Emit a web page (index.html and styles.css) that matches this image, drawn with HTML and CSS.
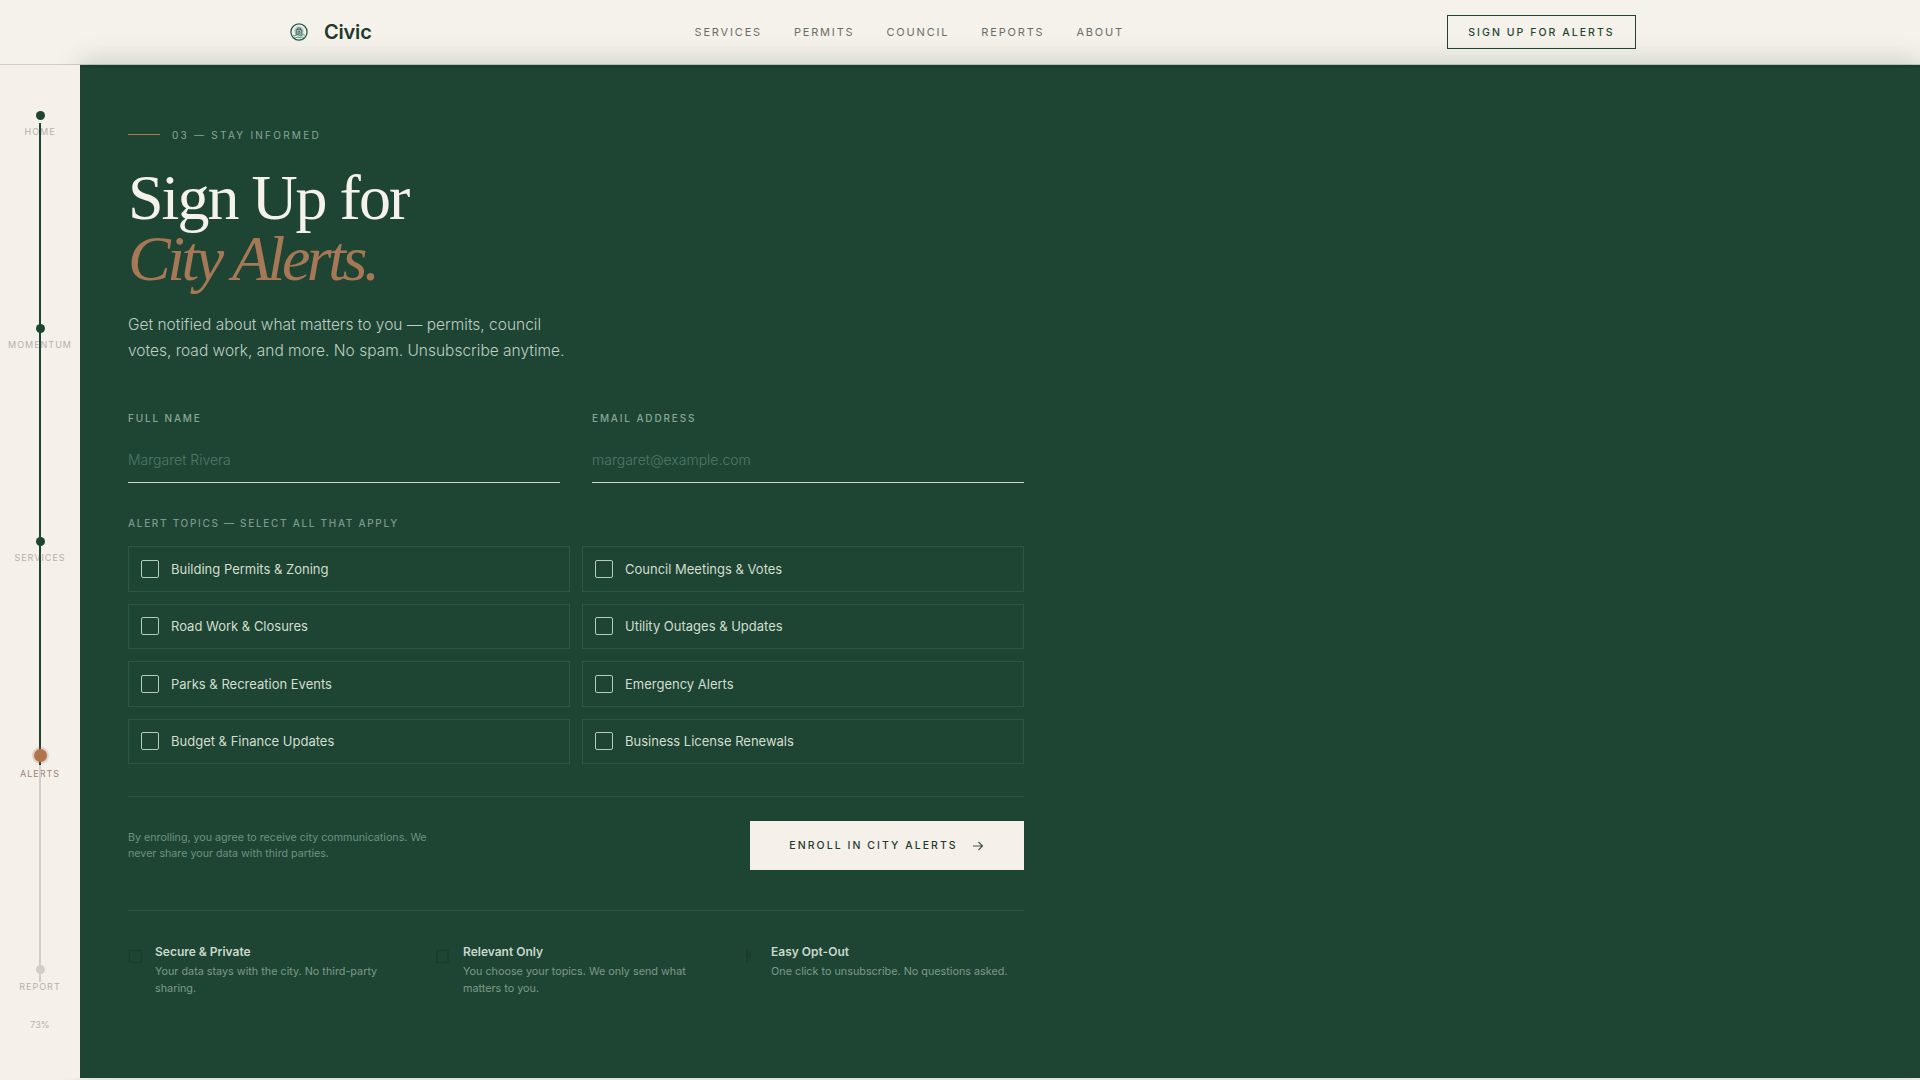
FILE: index.html
```html
<!DOCTYPE html>
<html lang="en">
<head>
<meta charset="utf-8">
<title>Civic — Sign Up for City Alerts</title>
<link rel="stylesheet" href="styles.css">
</head>
<body>
<header class="topbar">
  <a class="brand" href="#">
    <svg class="brand-mark" viewBox="0 0 20 20" aria-hidden="true">
      <circle cx="10" cy="10" r="9" fill="#eef0ea" stroke="#24564a" stroke-width="1.4"/>
      <circle cx="10" cy="9" r="5.4" fill="#bccaca"/>
      <path d="M7 13V7.5h6V13M8.5 7.5V5.6h3v1.9M9 13V9.5h2V13" fill="none" stroke="#2c5a4c" stroke-width="0.9"/>
      <path d="M3.5 13.5q1.6 1.4 3.2 0t3.3 0 3.3 0 3.2 0M5 16q1.3 1 2.5 0t2.5 0 2.5 0 2.5 0" fill="none" stroke="#2c6a55" stroke-width="0.9"/>
    </svg>
    <span class="brand-name">Civic</span>
  </a>
  <nav class="nav">
    <a href="#">SERVICES</a>
    <a href="#">PERMITS</a>
    <a href="#">COUNCIL</a>
    <a href="#">REPORTS</a>
    <a href="#">ABOUT</a>
  </nav>
  <a class="cta" href="#">SIGN UP FOR ALERTS</a>
</header>

<div class="shell">
  <aside class="rail">
    <div class="rail-track"></div>
    <div class="rail-fill"></div>
    <div class="stop"><span class="dot"></span><span class="stop-label">HOME</span></div>
    <div class="stop"><span class="dot"></span><span class="stop-label">MOMENTUM</span></div>
    <div class="stop"><span class="dot"></span><span class="stop-label">SERVICES</span></div>
    <div class="stop stop-active"><span class="dot"></span><span class="stop-label">ALERTS</span></div>
    <div class="stop stop-next"><span class="dot"></span><span class="stop-label">REPORT</span></div>
    <div class="rail-pct">73%</div>
  </aside>

  <main class="panel">
    <div class="eyebrow"><span class="eyebrow-rule"></span><span>03 — STAY INFORMED</span></div>
    <h1 class="title">Sign Up for<br><em>City Alerts.</em></h1>
    <p class="lede">Get notified about what matters to you — permits, council<br>votes, road work, and more. No spam. Unsubscribe anytime.</p>

    <form class="form">
      <div class="fields">
        <label class="field"><span class="field-label">FULL NAME</span><input class="field-input" type="text" placeholder="Margaret Rivera"></label>
        <label class="field"><span class="field-label">EMAIL ADDRESS</span><input class="field-input" type="email" placeholder="margaret@example.com"></label>
      </div>

      <div class="topics-label">ALERT TOPICS — SELECT ALL THAT APPLY</div>
      <div class="topics">
        <label class="topic"><span class="box"></span>Building Permits &amp; Zoning</label>
        <label class="topic"><span class="box"></span>Council Meetings &amp; Votes</label>
        <label class="topic"><span class="box"></span>Road Work &amp; Closures</label>
        <label class="topic"><span class="box"></span>Utility Outages &amp; Updates</label>
        <label class="topic"><span class="box"></span>Parks &amp; Recreation Events</label>
        <label class="topic"><span class="box"></span>Emergency Alerts</label>
        <label class="topic"><span class="box"></span>Budget &amp; Finance Updates</label>
        <label class="topic"><span class="box"></span>Business License Renewals</label>
      </div>

      <div class="submit-row">
        <p class="note">By enrolling, you agree to receive city communications. We<br>never share your data with third parties.</p>
        <button class="enroll" type="button">ENROLL IN CITY ALERTS
          <svg class="enroll-arrow" viewBox="0 0 14 14" aria-hidden="true"><path d="M2 7h9.5M7.5 3l4 4-4 4" fill="none" stroke="#3a5446" stroke-width="1.1"/></svg>
        </button>
      </div>
    </form>

    <div class="features">
      <div class="feature">
        <svg class="feature-icon" viewBox="0 0 15 16" aria-hidden="true"><rect x="1.5" y="2.5" width="12" height="12" fill="none" stroke="#1a3a2a" stroke-width="1.2"/></svg>
        <div><div class="feature-title">Secure &amp; Private</div><div class="feature-text">Your data stays with the city. No third-party sharing.</div></div>
      </div>
      <div class="feature">
        <svg class="feature-icon" viewBox="0 0 15 16" aria-hidden="true"><rect x="1" y="2.5" width="11" height="12" fill="none" stroke="#1a3a2a" stroke-width="1.2"/></svg>
        <div><div class="feature-title">Relevant Only</div><div class="feature-text">You choose your topics. We only send what matters to you.</div></div>
      </div>
      <div class="feature">
        <svg class="feature-icon" viewBox="0 0 15 16" aria-hidden="true"><path d="M3 2.5v11M5.5 4v7" fill="none" stroke="#1a3a2a" stroke-width="2"/></svg>
        <div><div class="feature-title">Easy Opt-Out</div><div class="feature-text">One click to unsubscribe. No questions asked.</div></div>
      </div>
    </div>
  </main>
</div>
</body>
</html>
```
FILE: styles.css
```css
* { box-sizing: border-box; }
html, body { margin: 0; height: 1080px; overflow: hidden; }
body {
  background: #f5f0ea;
  font-family: "Inter", "Liberation Sans", sans-serif;
  color: #1e3a2c;
}
a { text-decoration: none; color: inherit; }

.topbar {
  height: 65px;
  padding: 0 284px 0 290px;
  display: flex;
  align-items: center;
  justify-content: space-between;
  background: #f5f2eb;
  border-bottom: 1px solid #cfcdc6;
}
.brand { display: flex; align-items: center; gap: 16px; }
.brand-mark { width: 18px; height: 18px; display: block; }
.brand-name { font-size: 20px; font-weight: 600; letter-spacing: -0.2px; color: #1e3a2c; }
.nav { display: flex; gap: 32px; font-size: 11px; letter-spacing: 1.82px; color: #6d6d68; }
.cta {
  width: 189px;
  height: 34px;
  display: flex;
  align-items: center;
  justify-content: center;
  border: 1.5px solid #1e4533;
  font-size: 10.5px;
  font-weight: 500;
  letter-spacing: 2.05px;
  color: #1e4533;
}

.shell { display: flex; height: 1013px; }

.rail {
  position: relative;
  z-index: 2;
  width: 80px;
  flex: none;
  padding-top: 46px;
  background: #f5f0ea;
}
.rail-track {
  position: absolute;
  z-index: 1;
  left: 39px;
  top: 58px;
  width: 2px;
  height: 859px;
  background: #d3cec7;
}
.rail-fill {
  position: absolute;
  z-index: 1;
  left: 39px;
  top: 58px;
  width: 2px;
  height: 642px;
  background: #1e4533;
}
.stop {
  position: relative;
  height: 213px;
  display: flex;
  flex-direction: column;
  align-items: center;
}
.dot {
  position: relative;
  z-index: 2;
  width: 9px;
  height: 9px;
  margin-bottom: 6px;
  border-radius: 50%;
  background: #1e4533;
}
.stop-label {
  font-size: 9px;
  line-height: 12px;
  letter-spacing: 1px;
  color: #b5b1ab;
  white-space: nowrap;
}
.stop-active { height: 215px; }
.stop-active .dot {
  width: 13px;
  height: 13px;
  margin: -1px 0 6px;
  background: #b0754e;
  box-shadow: 0 0 0 2px rgba(176, 117, 78, 0.25);
}
.stop-active .stop-label { color: #9a8374; }
.stop-next { height: 54px; }
.stop-next .dot { margin-bottom: 7px; background: #d3cec7; }
.rail-pct {
  text-align: center;
  font-size: 9px;
  color: #b5b1ab;
}

.panel {
  position: relative;
  z-index: 1;
  flex: 1;
  padding: 60px 0 0 48px;
  background: #1e4533;
  border-top: 3px solid #1a3e2d;
  box-shadow: 0 -4px 24px rgba(30, 69, 51, 0.2);
}

.eyebrow {
  display: flex;
  align-items: center;
  gap: 12px;
  height: 13px;
  font-size: 10px;
  letter-spacing: 2.25px;
  color: #8ba596;
}
.eyebrow-rule { width: 32px; height: 1px; background: #a87c55; }

.title {
  margin: 26px 0 0;
  font-family: "Liberation Serif", serif;
  font-size: 64px;
  font-weight: 400;
  line-height: 61px;
  letter-spacing: -2px;
  color: #f5f2eb;
}
.title em { font-style: italic; letter-spacing: -3.5px; color: #a67855; }

.lede {
  margin: 23px 0 0;
  font-size: 15.5px;
  font-weight: 300;
  line-height: 26px;
  color: #bfcec3;
}

.form { width: 896px; }
.fields { display: grid; grid-template-columns: 1fr 1fr; gap: 32px; margin-top: 47px; }
.field { display: block; }
.field-label {
  display: block;
  font-size: 10px;
  line-height: 14px;
  font-weight: 500;
  letter-spacing: 1.85px;
  color: #8ba596;
}
.field-input {
  display: block;
  width: 100%;
  height: 46px;
  margin-top: 12px;
  padding: 0;
  border: 0;
  border-bottom: 1px solid #c9d9cd;
  background: transparent;
  font: 300 14px "Inter", "Liberation Sans", sans-serif;
  color: #e6ece6;
  outline: none;
}
.field-input::placeholder { color: #50796a; opacity: 1; }

.topics-label {
  margin-top: 33px;
  font-size: 10px;
  line-height: 14px;
  font-weight: 500;
  letter-spacing: 1.7px;
  color: #7c9a8a;
}
.topics { display: grid; grid-template-columns: 1fr 1fr; gap: 12px; margin-top: 16px; }
.topic {
  height: 45.5px;
  padding: 0 12px;
  display: flex;
  align-items: center;
  gap: 12px;
  border: 1px solid #2d5745;
  font-size: 13px;
  color: #d3decf;
}
.box {
  width: 18px;
  height: 18px;
  flex: none;
  border: 1px solid #b5cdbd;
  border-radius: 2px;
}

.submit-row {
  margin-top: 32px;
  padding: 24px 0 40px;
  display: flex;
  align-items: center;
  justify-content: space-between;
  border-top: 1px solid #2d5745;
  border-bottom: 1px solid #2d5745;
}
.note { margin: 0; font-size: 10.7px; line-height: 16px; color: #6f9180; }
.enroll {
  width: 274px;
  height: 49px;
  display: flex;
  align-items: center;
  justify-content: center;
  gap: 13px;
  padding: 0;
  border: 0;
  background: #f5f0ea;
  font: 500 10.5px "Inter", "Liberation Sans", sans-serif;
  letter-spacing: 2.05px;
  color: #1e3a2c;
}
.enroll-arrow { width: 14px; height: 14px; display: block; }

.features {
  width: 896px;
  margin-top: 32px;
  display: grid;
  grid-template-columns: repeat(3, 1fr);
  gap: 28px;
}
.feature { display: flex; gap: 12px; }
.feature-icon { width: 15px; height: 16px; flex: none; margin-top: 5px; }
.feature-title { font-size: 12px; font-weight: 600; line-height: 18px; color: #c9d8cc; }
.feature-text { margin-top: 2px; font-size: 10.8px; line-height: 17px; color: #7c9a8a; }
```
